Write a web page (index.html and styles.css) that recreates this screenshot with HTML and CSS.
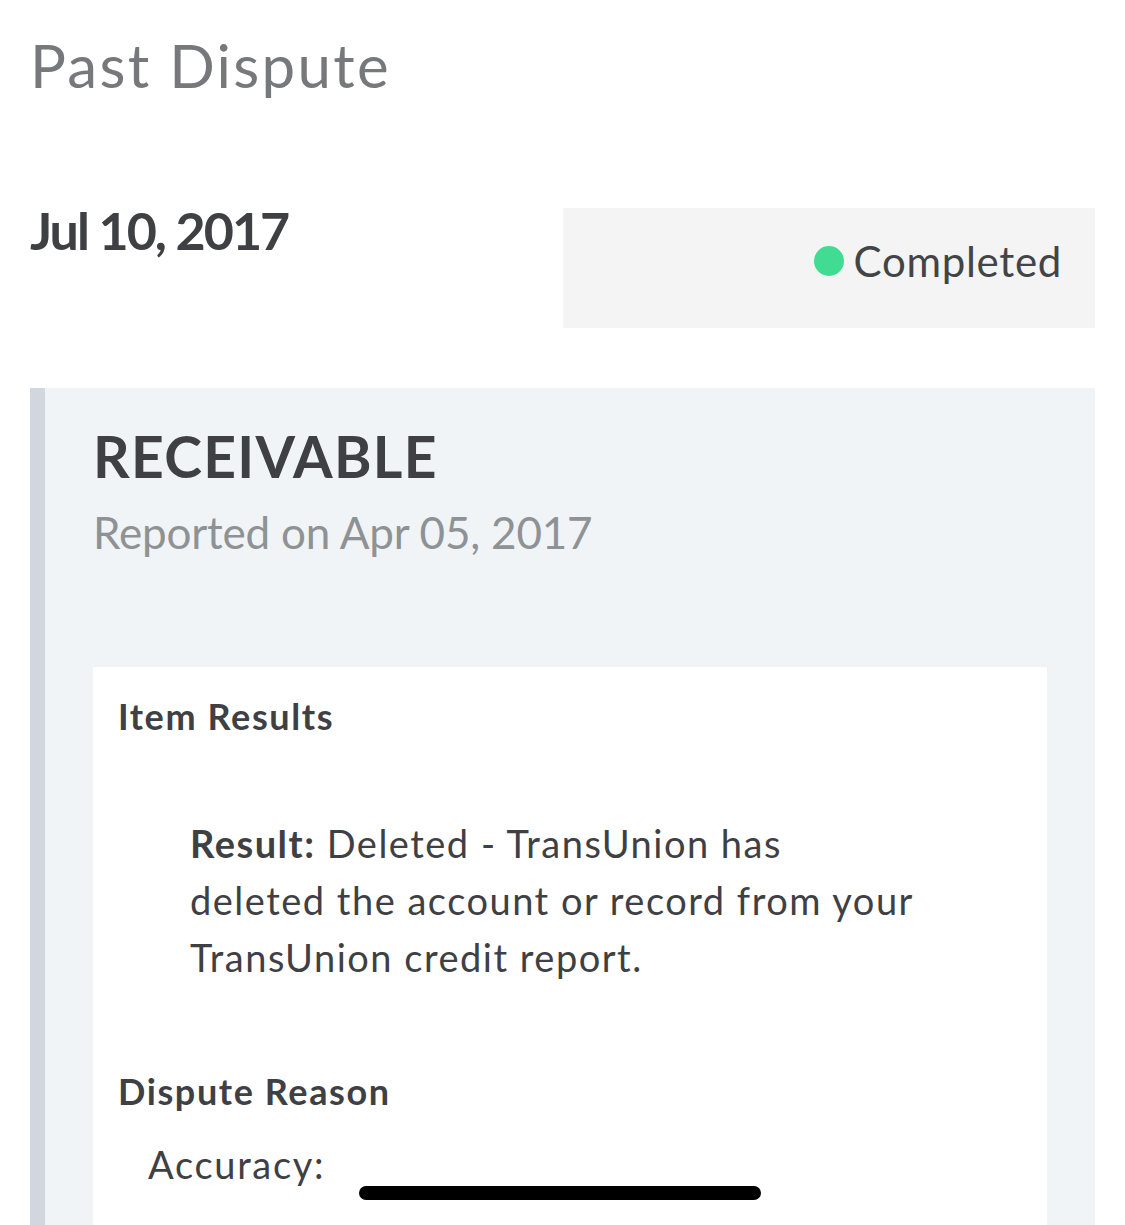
FILE: index.html
```html
<!DOCTYPE html>
<html lang="en">
<head>
  <meta charset="UTF-8">
  <meta name="viewport" content="width=device-width, initial-scale=1.0">
  <title>Past Dispute</title>
  <link rel="stylesheet" href="styles.css">
</head>
<body>

  <h1 class="page-title">Past Dispute</h1>

  <div class="dispute-header">
    <div class="dispute-date">Jul 10, 2017</div>
    <div class="status-box">
      <span class="status-dot"></span>
      <span class="status-text">Completed</span>
    </div>
  </div>

  <div class="account-card">
    <div class="account-name">RECEIVABLE</div>
    <div class="account-reported">Reported on Apr 05, 2017</div>

    <div class="results-box">
      <div class="section-label">Item Results</div>
      <p class="result-text"><b>Result:</b> Deleted - TransUnion has deleted the account or record from your TransUnion credit report.</p>

      <div class="section-label reason-label">Dispute Reason</div>
      <div class="reason-row">
        <span class="reason-name">Accuracy:</span>
        <span class="redacted"></span>
      </div>
    </div>
  </div>

</body>
</html>
```

FILE: styles.css
```css
body {
  margin: 0;
  padding: 29px 30px 0;
  font-family: Lato, "Open Sans", sans-serif;
  color: #3e4043;
  background: #fff;
  overflow: hidden;
}

.page-title {
  margin: 0;
  font-size: 60px;
  line-height: 72px;
  font-weight: 400;
  letter-spacing: 2.3px;
  color: #76787b;
}

.dispute-header {
  display: flex;
  justify-content: space-between;
  align-items: flex-start;
  margin-top: 98px;
}

.dispute-date {
  font-size: 52px;
  line-height: 62px;
  font-weight: 700;
  letter-spacing: -2px;
}

.status-box {
  width: 532px;
  box-sizing: border-box;
  margin-top: 9px;
  padding: 28px 33px 42px 0;
  background-color: #f4f4f4;
  display: flex;
  justify-content: flex-end;
  align-items: center;
  gap: 10px;
}

.status-dot {
  width: 30px;
  height: 30px;
  border-radius: 50%;
  background-color: #40dc92;
}

.status-text {
  font-size: 42px;
  line-height: 50px;
  letter-spacing: 0.7px;
  color: #424447;
}

.account-card {
  margin-top: 60px;
  padding: 34px 48px 0;
  background-color: #f0f4f7;
  border-left: 15px solid #d2d7df;
  height: 900px;
}

.account-name {
  font-size: 57px;
  line-height: 68px;
  font-weight: 700;
  letter-spacing: 1.3px;
}

.account-reported {
  margin-top: 16px;
  font-size: 44px;
  line-height: 53px;
  letter-spacing: -0.2px;
  color: #8f9295;
}

.results-box {
  margin-top: 108px;
  padding: 28px 25px 0;
  background-color: #fff;
  height: 700px;
}

.section-label {
  font-size: 36px;
  line-height: 43px;
  font-weight: 700;
  letter-spacing: 1.6px;
}

.result-text {
  margin: 77px 0 0 72px;
  max-width: 728px;
  font-size: 38px;
  line-height: 57px;
  letter-spacing: 1.5px;
}

.result-text b {
  font-weight: 700;
}

.reason-label {
  margin-top: 84px;
}

.reason-row {
  display: flex;
  align-items: flex-start;
  gap: 34px;
  margin: 23px 0 0 30px;
}

.reason-name {
  font-size: 38px;
  line-height: 57px;
  letter-spacing: 1.7px;
}

.redacted {
  width: 402px;
  height: 14px;
  margin-top: 50px;
  border-radius: 7px;
  background-color: #000;
}
```
